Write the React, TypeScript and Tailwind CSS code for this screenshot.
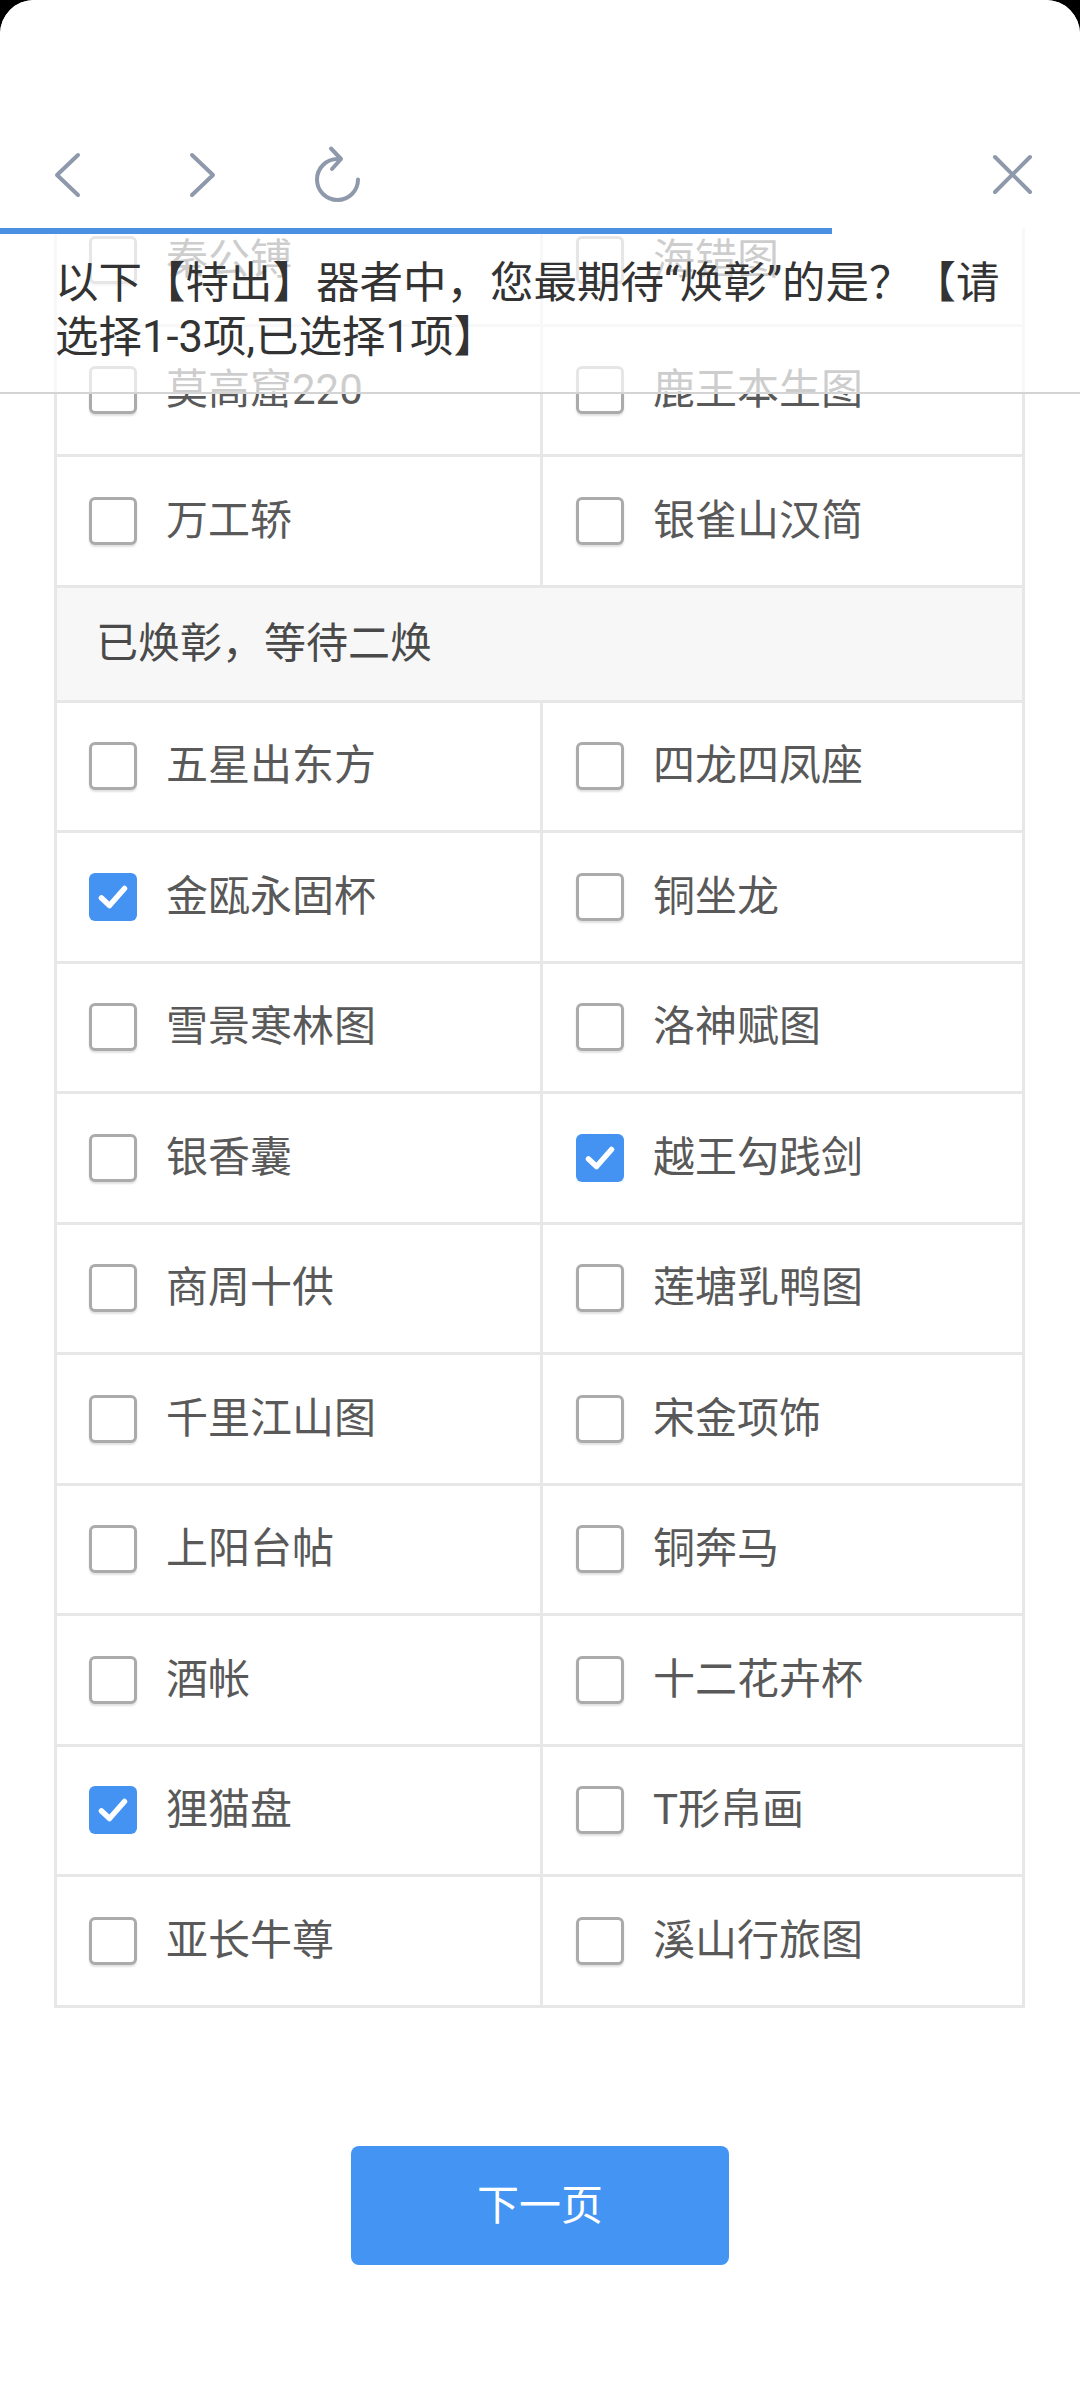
type Item = { name: string; checked?: boolean };

const topRows: [Item, Item][] = [
  [{ name: '秦公镈' }, { name: '海错图' }],
  [{ name: '莫高窟220' }, { name: '鹿王本生图' }],
  [{ name: '万工轿' }, { name: '银雀山汉简' }],
];

const waitRows: [Item, Item][] = [
  [{ name: '五星出东方' }, { name: '四龙四凤座' }],
  [{ name: '金瓯永固杯', checked: true }, { name: '铜坐龙' }],
  [{ name: '雪景寒林图' }, { name: '洛神赋图' }],
  [{ name: '银香囊' }, { name: '越王勾践剑', checked: true }],
  [{ name: '商周十供' }, { name: '莲塘乳鸭图' }],
  [{ name: '千里江山图' }, { name: '宋金项饰' }],
  [{ name: '上阳台帖' }, { name: '铜奔马' }],
  [{ name: '酒帐' }, { name: '十二花卉杯' }],
  [{ name: '狸猫盘', checked: true }, { name: 'T形帛画' }],
  [{ name: '亚长牛尊' }, { name: '溪山行旅图' }],
];

function CheckBox({ checked }: { checked?: boolean }) {
  if (checked) {
    return (
      <span className="flex h-[48px] w-[48px] shrink-0 items-center justify-center rounded-[6px] bg-[#4493f2]">
        <svg width="48" height="48" viewBox="0 0 48 48">
          <path d="M12.5 25 L20.5 32.5 L35.5 15.5" fill="none" stroke="#fff" strokeWidth="5.5" strokeLinecap="round" strokeLinejoin="round" />
        </svg>
      </span>
    );
  }
  return (
    <span className="h-[48px] w-[48px] shrink-0 rounded-[6px] border-[3px] border-[#ababab] bg-white shadow-[0_2px_2px_rgba(0,0,0,0.12)]" />
  );
}

function Cell({ item, left }: { item: Item; left?: boolean }) {
  return (
    <div
      className={
        left
          ? 'flex w-[486px] items-center border-r-[3px] border-[#e7e7e7] pl-[32px]'
          : 'flex flex-1 items-center pl-[33px]'
      }
    >
      <CheckBox checked={item.checked} />
      <span className="ml-[29px] text-[42px] leading-none text-[#595959]">{item.name}</span>
    </div>
  );
}

function Row({ pair }: { pair: [Item, Item] }) {
  return (
    <div className="flex h-[130.5px] border-b-[3px] border-[#e7e7e7]">
      <Cell item={pair[0]} left />
      <Cell item={pair[1]} />
    </div>
  );
}

function NavBar() {
  const stroke = '#8e99ab';
  return (
    <header className="relative z-20 h-[228px] shrink-0 bg-white pt-[143px]">
      <div className="flex h-[64px] items-center pl-[44px] pr-[42px]">
        {/* back */}
        <svg width="48" height="64" viewBox="0 0 48 64">
          <path d="M34 12 L13 32 L34 52" fill="none" stroke={stroke} strokeWidth="4" strokeLinecap="round" strokeLinejoin="round" />
        </svg>
        {/* forward */}
        <svg className="ml-[87px]" width="48" height="64" viewBox="0 0 48 64">
          <path d="M13 12 L34 32 L13 52" fill="none" stroke={stroke} strokeWidth="4" strokeLinecap="round" strokeLinejoin="round" />
        </svg>
        {/* refresh */}
        <svg className="ml-[83px]" width="56" height="64" viewBox="0 0 56 64">
          <path d="M27.5 16 A20.5 20.5 0 1 0 48 36.5" fill="none" stroke={stroke} strokeWidth="4" strokeLinecap="round" />
          <path d="M21 5.5 L31 16 L22 26" fill="none" stroke={stroke} strokeWidth="4" strokeLinecap="round" strokeLinejoin="round" />
        </svg>
        {/* close */}
        <svg className="ml-auto" width="50" height="64" viewBox="0 0 50 64">
          <path d="M7 14 L42 49 M42 14 L7 49" fill="none" stroke={stroke} strokeWidth="4" strokeLinecap="round" />
        </svg>
      </div>
    </header>
  );
}

export default function App() {
  return (
    <div className="min-h-screen bg-black font-[Roboto,'Noto_Sans_CJK_SC',sans-serif]">
      <div className="relative flex h-[2403px] flex-col overflow-hidden rounded-t-[34px] bg-white">
        <NavBar />

        <main className="relative flex-1 overflow-hidden">
          {/* question bar floating over the list */}
          <div className="absolute inset-x-0 top-0 z-10 h-[166px] border-b-2 border-[#d4d4d4] bg-white/70">
            <div className="h-[6px] w-[832px] bg-[#4a90e2]" />
            <p className="ml-[55px] mt-[23px] w-[950px] text-[43.5px] leading-[54px] text-[#333]">
              以下【特出】器者中，您最期待“焕彰”的是？【请选择1-3项,已选择1项】
            </p>
          </div>

          <div className="-mt-[32px] ml-[54px] w-[971px] border-x-[3px] border-[#e7e7e7]">
            {topRows.map((pair, i) => (
              <Row key={i} pair={pair} />
            ))}
            <div className="flex h-[115px] items-center border-b-[3px] border-[#e7e7e7] bg-[#f7f7f7] pl-[39px]">
              <span className="text-[42px] leading-none text-[#4a4a4a]">已焕彰，等待二焕</span>
            </div>
            {waitRows.map((pair, i) => (
              <Row key={i} pair={pair} />
            ))}
          </div>

          <div className="flex justify-center pt-[138px]">
            <button className="h-[119px] w-[378px] rounded-[8px] bg-[#4494f4] text-[42px] text-white">
              下一页
            </button>
          </div>
        </main>
      </div>
    </div>
  );
}
